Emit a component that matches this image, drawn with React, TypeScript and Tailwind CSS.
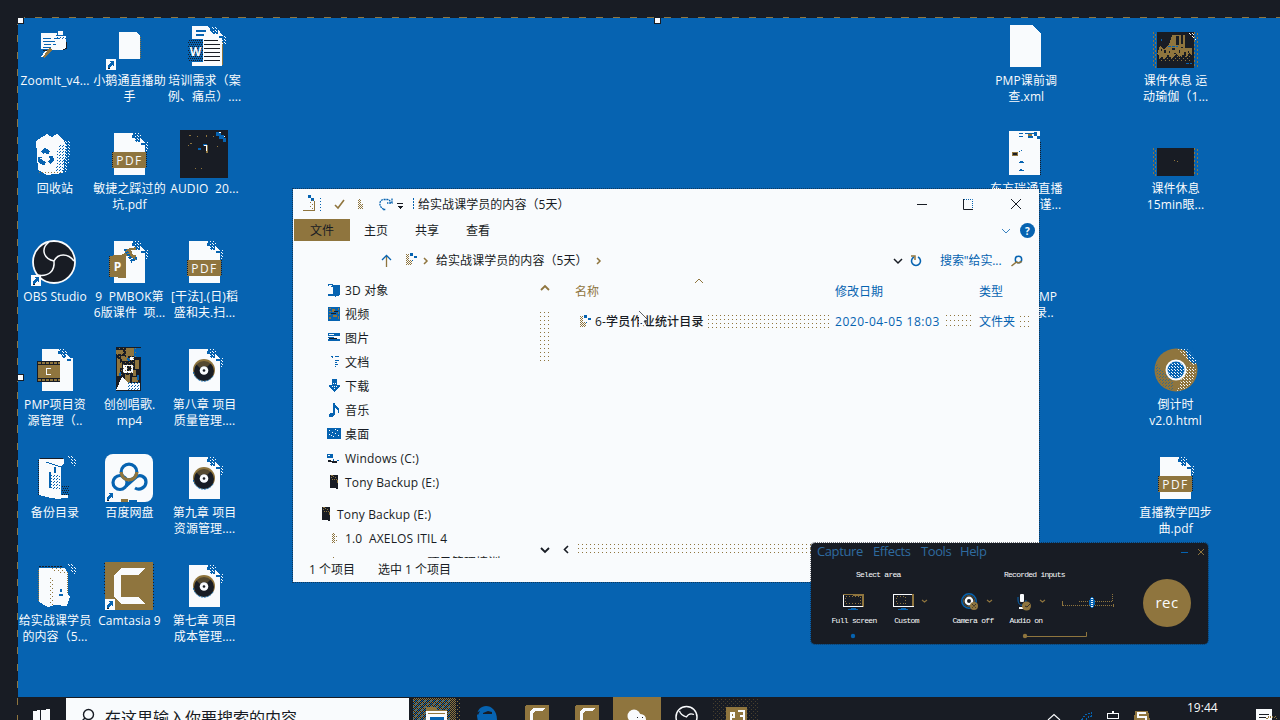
import React from 'react';

const K = '#181c24';
const B = '#0663b1';
const G = '#8f753e';
const W = '#f9fbfd';

type P = { children?: React.ReactNode };

const Patterns = () => (
  <svg className="absolute size-0" aria-hidden="true">
    <defs>
      <pattern id="dotB" width="3" height="3" patternUnits="userSpaceOnUse">
        <path fill={B} d="M0 0h1v1H0zM2 1h1v1H2z" />
      </pattern>
      <pattern id="dotG" width="4" height="4" patternUnits="userSpaceOnUse">
        <path fill={G} d="M0 0h1v1H0zM2 2h1v1H2z" />
      </pattern>
      <pattern id="dotT" width="2" height="2" patternUnits="userSpaceOnUse">
        <path fill={G} d="M0 0h1v1H0zM1 1h1v1H1z" />
      </pattern>
      <pattern id="dotW" width="3" height="3" patternUnits="userSpaceOnUse">
        <path fill={W} d="M0 0h1v1H0zM2 2h1v1H2z" />
      </pattern>
      <pattern id="dotK" width="2" height="4" patternUnits="userSpaceOnUse">
        <path fill={K} d="M0 0h1v1H0zM1 2h1v1H1z" />
      </pattern>
    </defs>
  </svg>
);

const Art = ({ children }: P) => (
  <svg viewBox="0 0 48 48" className="block size-12 overflow-visible" shapeRendering="crispEdges">
    {children}
  </svg>
);

const Fold = ({ x = 0, y = 0 }) => (
  <g>
    <path fill="url(#dotW)" d={`M${x} ${y}h8l3 9h5v9h-7l-6-8z`} />
    <path fill={B} d={`M${x} ${y + 2}h3v3h-3zM${x + 9} ${y + 9}h4v3h-4z`} />
    <path fill={W} d={`M${x + 8} ${y + 5}v5h5z`} />
  </g>
);

const Shortcut = ({ x = 0, y = 37 }) => (
  <g>
    <rect x={x} y={y} width="10" height="11" fill={W} />
    <path d={`M${x + 2} ${y + 9}v-3l3-2-1-2h4v5l-2-1-2 3z`} fill={B} />
    <path d={`M${x + 2} ${y + 9}h2v1h-2z`} fill={K} />
  </g>
);

const Page = ({ children }: P) => (
  <Art>
    <path fill={W} d="M9 3h18l4 9h9v33H9z" />
    <Fold x={27} y={3} />
    {children}
  </Art>
);

const Pdf = () => (
  <Page>
    <rect x="7" y="22" width="34" height="16" fill={G} />
    <path d="M7 22v16M41 22v16" stroke={K} strokeDasharray="1 1" />
    <text x="24.5" y="34.5" textAnchor="middle" fontSize="12" letterSpacing="1.5" fill={W} fontFamily="Open Sans, sans-serif" shapeRendering="auto">PDF</text>
  </Page>
);

const Disc = () => (
  <Page>
    <g shapeRendering="auto">
      <circle cx="24" cy="24" r="11" fill={G} />
      <circle cx="24" cy="25" r="10" fill={K} />
      <path d="M16 18a10 10 0 0 1 15-1l-4 4a5 5 0 0 0-7 1z" fill={G} opacity=".5" />
      <path d="M13.500 26a10.500 10.500 0 0 0 20 3" stroke={B} fill="none" strokeDasharray="2 1" />
      <circle cx="24" cy="24.500" r="4.300" fill={W} />
      <circle cx="24" cy="24.500" r="1.300" fill={K} />
    </g>
  </Page>
);

const Zoomit = () => (
  <Art>
    <path fill={W} d="M11 11h16v3h9v13l-4 1H19l-3-1h-5z" />
    <path stroke={B} d="M13 16.500h8m3 0h6m-17 3h12m-11 3h7m2 0h3m-13 3h8" />
    <path fill="url(#dotB)" d="M26 9h10v8H26z" />
    <path fill={W} d="M28 9h5v4h-5z" />
    <path stroke={K} strokeWidth="1" d="M36.500 20v6l-3 2m-20 0 4 1" fill="none" />
    <path stroke={G} strokeWidth="4" d="m21 27-8 8" />
    <path stroke={W} strokeWidth="1.500" d="m16 29-4 6" />
  </Art>
);

const Blank = () => (
  <Art>
    <path fill={W} d="M14 10h17l4 4v23H14z" />
    <path stroke={G} strokeDasharray="1 1" d="M35.500 15v22" />
    <Shortcut x={1} />
  </Art>
);

const Word = () => (
  <Art>
    <path fill={W} d="M12 4h16l5 8h9v32H12z" />
    <path fill={G} d="M42 20h1v23h-1z" />
    <Fold x={30} y={4} />
    <path stroke={B} strokeWidth="1.500" d="M16 9h10M16 13h8" />
    <path stroke={K} d="M24 18.500h14M24 22.500h16M24 26.500h16M24 30.500h16M24 34.500h16M24 38.500h16" />
    <path fill={B} d="M9 17h14v23H9z" />
    <path fill="url(#dotK)" d="M8 17h15v23H8z" />
    <text x="15.500" y="34" textAnchor="middle" fontSize="12" fontWeight="700" fill={W} fontFamily="Open Sans, sans-serif" shapeRendering="auto">W</text>
  </Art>
);

const Recycle = () => (
  <Art>
    <path fill={W} d="m6 11 11-7 5 3 5-3 7 6 2 6-3 27-9 1-7 1-9-5z" />
    <path fill="url(#dotB)" d="M28 14h8l-2 29h-8z" />
    <path fill="url(#dotW)" d="M35 11h5v13l-3 18h-4z" />
    <path d="m12 23 3-3 4 3m2 3 1 4-3 3m-4 1-5-3v-4" fill="none" stroke={B} strokeWidth="4" />
    <path d="M21 19v7m-11 2h4" stroke={W} />
    <path stroke={G} strokeDasharray="1 2" d="M9 42h22" />
  </Art>
);

const Audio = () => (
  <Art>
    <path fill={K} d="M0 0h48v48H0z" />
    <path fill={G} d="M9 5h2v1H9zM17 6h1v1h-1zM26 5h1v2h-1zM33 6h1v1h-1zM10 13h2v1h-2zM8 15h1v1H8zM15 38h1v1h-1zM21 38h1v1h-1zM37 16h1v1h-1zM26 15h2v8h-2z" />
    <path stroke={B} strokeWidth="2" fill="none" d="M18 19h3m2-4h4" />
    <path fill={B} d="M36 2h5v3h3v3h2v4h-3V9h-4V6h-3z" />
    <path stroke={W} fill="none" d="M24 16v-1h2v6M39 2.500h2M44 6.500h1" />
  </Art>
);

const Swirl = () => (
  <g>
    <circle cx="24" cy="24" r="21" fill={K} stroke={W} strokeWidth="1.800" />
    <g fill="none" stroke={W} strokeWidth="1.500">
      <path d="M24 23c-10-2-14-12-5-19" />
      <path d="M24 23c4-8 14-8 20 0" />
      <path d="M24 23c1 10-5 16-17 14" />
    </g>
  </g>
);

const Obs = () => (
  <Art>
    <g shapeRendering="auto"><Swirl /></g>
    <Shortcut x={1} y={37} />
  </Art>
);

const Ppt = () => (
  <Page>
    <path d="M31 9v13l-5-3-7-2 2-6z" fill={G} />
    <path d="M20 11l7 12 5-3" stroke={B} strokeWidth="3" fill="none" strokeDasharray="2 1" />
    <path d="M26 12h7v5h-5z" fill={W} />
    <path fill={G} d="m4 18 17-2v24L4 39z" />
    <path stroke={K} strokeDasharray="1 1" d="M4.500 18v21" />
    <text x="12.500" y="33" textAnchor="middle" fontSize="12" fontWeight="700" fill={W} fontFamily="Open Sans, sans-serif" shapeRendering="auto">P</text>
  </Page>
);

const CamFile = () => (
  <Art>
    <path fill={W} d="M12 3h17l4 9h10v33H12z" />
    <Fold x={28} y={3} />
    <path d="M7 15h23v21H7z" fill={K} />
    <path d="M8 19h22v13H8z" fill={G} />
    <path d="M8 17h22M8 34h22" stroke={G} strokeWidth="2" strokeDasharray="3 1" />
    <path d="M21 22.500h-4.500v6H21" fill="none" stroke={W} strokeWidth="1.300" />
  </Art>
);

const Video = () => (
  <Art>
    <path fill={K} d="M11 1h25v44H11z" />
    <path fill={G} d="M11 4h7v4h-7zM21 2h8v8h-6v5h-6v-4h4zM12 13h3v17h-3zM20 29h5v10h-5zM30 14h4v9h-4zM27 31h6v5h-6zM16 10h4v2h-4zM14 17h3v5h-3zM28 24h3v6h-3z" />
    <path fill={B} d="M29 2h7v9h-7zM22 12h3v3h-3zM14 26h2v4h-2zM32 29h2v5h-2z" />
    <path fill={W} d="m11 44 6-13 6 6h12v7zM18 19h10v8H18zM25 11h4v3h-4z" />
    <path fill={K} d="M22 20h4v5h-4zM20 15h3v3h-3z" />
    <path fill="url(#dotB)" d="M22 36h13v8H22z" />
    <path fill="url(#dotG)" d="M11 2h20v28H11z" />
  </Art>
);

const FolderBlue = () => (
  <Art>
    <path fill={W} d="M9 5h25v5l-3 2v33h-3l-7-1-12-3z" />
    <path stroke={K} d="M10 4.500h23" />
    <path stroke={K} strokeDasharray="1 1" d="M8.500 6v36" />
    <path stroke={B} d="m16 8 15 5" fill="none" />
    <path fill={B} d="M19 18h2v16h-2zM24 13h2v6h-2z" />
    <path fill="url(#dotB)" d="M21 20h9v15h-9z" />
    <path fill="url(#dotK)" d="M32 32h7v10h-7z" />
    <path fill={W} d="M29 41h9v3h-9z" />
    <path fill="url(#dotW)" d="M37 2h4l6 6v4h-4z" />
  </Art>
);

const FolderFull = () => (
  <Art>
    <path fill={W} d="M9 6h26l3 5v21l2 3-3 9-13-1-6 2-9-5z" />
    <path stroke={K} strokeDasharray="2 1" d="M9 4.500h24" />
    <path fill="url(#dotG)" d="M19 16h5v27h-5zM20 6h12l5 6h-8z" />
    <path stroke={G} strokeDasharray="1 1" d="M8.500 8v32M37.500 10v22" />
    <path fill={B} d="M30 27h2v3h-2zM29 32h4v2h-4z" />
    <path fill="url(#dotW)" d="M37 2h4l6 6v4h-4z" />
  </Art>
);

const Baidu = () => (
  <Art>
    <rect width="48" height="48" rx="8" fill={W} shapeRendering="auto" />
    <g fill="none" strokeWidth="3.200" shapeRendering="auto">
      <circle cx="24" cy="18" r="7.800" stroke={B} />
      <path d="m21 32 9-8c5-5 11-1 11 4s-6 9-11 6" stroke={B} />
      <circle cx="15" cy="28.500" r="7" stroke={B} />
      <path d="M16.200 18a7.800 7.800 0 0 0 15.600 0" stroke={G} />
    </g>
    <path fill={G} d="M16 45h7v3h-7z" />
    <path fill={B} d="M24 46h8v2h-8z" />
    <Shortcut />
  </Art>
);

const Camtasia = () => (
  <Art>
    <rect width="48" height="48" rx="1" fill={G} />
    <path stroke={K} strokeDasharray="1 2" d="M-.5 1v32M48.500 2v44" />
    <path fill={W} d="M17 6h23l-7 7H16v22h17l7 7H17l-8-7V13z" />
    <Shortcut />
  </Art>
);

const PlainPage = () => (
  <Art>
    <path fill={W} d="M9 3h22l9 9v33H9z" />
  </Art>
);

const FormPage = () => (
  <Art>
    <path fill={W} d="M8 1h31v44H8z" />
    <path fill={B} d="M18 3h4v1h-4zM24 3h10v1H24zM18 6h4v1h-4zM27 6h5v2h-5zM18 21h1v1h-1zM20 20h1v1h-1zM18 32h5v1h-5zM19 31h3v1h-3zM18 40h5v1h-5zM19 39h2v1h-2z" />
    <path fill={G} d="M11 22h6v4h-6zM27 4h4v2h-4z" />
    <path fill={K} d="M12 23h4v2h-4z" />
    <path stroke={K} strokeDasharray="1 1" d="M39.500 12v33" />
    <path fill={B} d="M33 2h3v4h-3zM36 6h3v3h-3z" />
  </Art>
);

const FilmSides = ({ y = 0, h = 36 }) => (
  <g>
    <path fill={K} d={`M6 ${y}h37v${h}H6z`} />
    <path stroke={G} strokeDasharray="2 2" d={`M2.500 ${y}v${h}M4.500 ${y + 2}v${h - 2}M43.500 ${y}v${h}M46.500 ${y + 1}v${h - 1}`} />
  </g>
);

const Yoga = () => (
  <Art>
    <FilmSides y={10} h={36} />
    <path fill={G} d="m18 23 3-10h13v10h3l4 4v6l-3-2-2 4-4-2-4 2-3-3-4 4-4-3-3 4-3-2-3 2v-4l-2-1 3-8 4 3z" />
    <path fill={K} d="M25 14h3v9h-3zM30 13h2v9h-2zM13 28h2v3h-2zM21 26h3v2h-3zM34 19h7v7h-7zM33 30h2v4h-2z" />
    <path fill={K} d="M18 29h1v2h-1zM16 33h1v2h-1zM23 31h2v1h-2zM28 28h1v3h-1zM37 29h1v2h-1zM30 25h2v1h-2zM10 27h1v2h-1z" />
    <path stroke={B} d="M17 24.500h10M35 41h6M10 17v2" strokeDasharray="3 1" />
    <path fill="url(#dotW)" d="M37 11h6l3 7h-4z" />
    <path fill="url(#dotG)" d="M8 32h32v8H8z" />
  </Art>
);

const Black = () => (
  <Art>
    <FilmSides y={18} h={28} />
    <path fill={G} d="M23 30h1v1h-1zM26 31h1v1h-1z" />
  </Art>
);

const Chrome = () => (
  <Art>
    <g shapeRendering="auto">
      <circle cx="25" cy="24" r="21.500" fill={G} />
      <path fill={B} d="M33 0h8l6 13-3 5-6-3z" />
      <path fill="url(#dotW)" d="M27 3h9l9 10v6h-5l-4-6z" />
      <path fill="url(#dotW)" d="M35 21h10c0 14-8 23-19 24z" />
      <path fill="url(#dotB)" d="M5 17l17 19 1 8C10 43 4 31 5 17z" opacity=".6" />
      <circle cx="25" cy="24" r="9.500" fill={B} stroke={W} strokeWidth="2" />
      <circle cx="25" cy="24" r="8" fill="url(#dotW)" />
    </g>
  </Art>
);

type Item = { c: string; a?: React.ReactNode; t: string[] };
const items: Item[] = [
  { c: 'col-start-1 row-start-1', a: <Zoomit />, t: ['ZoomIt_v4...'] },
  { c: 'col-start-2 row-start-1', a: <Blank />, t: ['小鹅通直播助', '手'] },
  { c: 'col-start-3 row-start-1', a: <Word />, t: ['培训需求（案', '例、痛点）....'] },
  { c: 'col-start-1 row-start-2', a: <Recycle />, t: ['回收站'] },
  { c: 'col-start-2 row-start-2', a: <Pdf />, t: ['敏捷之踩过的', '坑.pdf'] },
  { c: 'col-start-3 row-start-2', a: <Audio />, t: ['AUDIO  20...'] },
  { c: 'col-start-1 row-start-3', a: <Obs />, t: ['OBS Studio'] },
  { c: 'col-start-2 row-start-3', a: <Ppt />, t: ['9  PMBOK第', '6版课件  项...'] },
  { c: 'col-start-3 row-start-3', a: <Pdf />, t: ['[干法].(日)稻', '盛和夫.扫...'] },
  { c: 'col-start-1 row-start-4', a: <CamFile />, t: ['PMP项目资', '源管理（..'] },
  { c: 'col-start-2 row-start-4', a: <Video />, t: ['创创唱歌.', 'mp4'] },
  { c: 'col-start-3 row-start-4', a: <Disc />, t: ['第八章 项目', '质量管理....'] },
  { c: 'col-start-1 row-start-5', a: <FolderBlue />, t: ['备份目录'] },
  { c: 'col-start-2 row-start-5', a: <Baidu />, t: ['百度网盘'] },
  { c: 'col-start-3 row-start-5', a: <Disc />, t: ['第九章 项目', '资源管理....'] },
  { c: 'col-start-1 row-start-6', a: <FolderFull />, t: ['给实战课学员', '的内容（5...'] },
  { c: 'col-start-2 row-start-6', a: <Camtasia />, t: ['Camtasia 9'] },
  { c: 'col-start-3 row-start-6', a: <Disc />, t: ['第七章 项目', '成本管理....'] },
  { c: 'col-start-14 row-start-1', a: <PlainPage />, t: ['PMP课前调', '查.xml'] },
  { c: 'col-start-16 row-start-1', a: <Yoga />, t: ['课件休息 运', '动瑜伽（1...'] },
  { c: 'col-start-14 row-start-2', a: <FormPage />, t: ['东方瑞通直播', '课前调查谨...'] },
  { c: 'col-start-16 row-start-2', a: <Black />, t: ['课件休息', '15min眼...'] },
  { c: 'col-start-14 row-start-3', t: ['直播间PMP', '资料目录..'] },
  { c: 'col-start-16 row-start-4', a: <Chrome />, t: ['倒计时', 'v2.0.html'] },
  { c: 'col-start-16 row-start-5', a: <Pdf />, t: ['直播教学四步', '曲.pdf'] },
];

const Desktop = () => (
  <div className="grid grid-cols-[74px_75px_75px_repeat(14,74.7px)] grid-rows-[repeat(6,108px)] pt-[4px]">
    {items.map((it) => (
      <div key={it.c} className={`${it.c} flex flex-col items-center text-[#f9fbfd]`}>
        <div className="size-12 -translate-x-px">{it.a}</div>
        <div className="mt-[3px] text-center text-[12px] leading-4 tracking-[0.1px] whitespace-pre">
          {it.t.map((l) => <div key={l}>{l}</div>)}
        </div>
      </div>
    ))}
  </div>
);

const Chev = ({ d, c = K, w = 1.8 }: { d: string; c?: string; w?: number }) => (
  <svg viewBox="0 0 10 10" className="size-[10px] shrink-0"><path d={d} fill="none" stroke={c} strokeWidth={w} /></svg>
);

const MiniFolder = () => (
  <svg viewBox="0 0 14 16" className="h-4 w-[14px] shrink-0" shapeRendering="crispEdges">
    <path fill="url(#dotT)" d="M2 2h3v11H2zM5 8h3v5H5z" />
    <path fill={B} d="M6 1h3v3H6zM10 4h3v2h-3zM8 8h1v1H8z" />
  </svg>
);

const Sm = ({ children }: P) => (
  <svg viewBox="0 0 16 16" className="size-4 shrink-0" shapeRendering="crispEdges">{children}</svg>
);

const Drive = () => (
  <Sm>
    <path fill={K} d="M4 1h8v14h-2l-1-1H4z" />
    <path fill={G} d="M5 3h1v1H5zM7 2h1v1H7zM9 3h1v1H9zM6 5h1v1H6zM8 5h1v1H8zM10 5h1v1h-1zM5 1h2v1H5zM11 6h1v3h-1z" />
  </Sm>
);

const tree: [React.ReactNode, string][] = [
  [<Sm><path fill={B} d="M2 2h5v1h7v10l-5 2v-1H2v-2h5V5L2 4z" /><path fill={W} d="M3 3h3v1H3z" /></Sm>, '3D 对象'],
  [<Sm><path fill={B} d="M2 1h12v14H2z" /><path fill={G} d="M3 2h2v1H3zM3 5h2v1H3zM3 8h2v1H3zM3 11h2v2H3zM6 3h3v3H6zM7 9h4v2H7zM12 2h1v2h-1zM12 6h1v2h-1zM12 10h1v3h-1z" /><path fill={K} d="M5 7h5v1H5zM8 5h4v1H8z" /></Sm>, '视频'],
  [<Sm><path fill={B} d="M2 3h12v3H2zM2 7h6v1H2zM2 9h12v2H2z" /><path fill={K} d="M3 8h8v1H3z" /><path fill={W} d="M3 4h5v1H3z" /></Sm>, '图片'],
  [<Sm><path fill={B} d="M6 3h1v1H6zM9 2h4v1H9zM9 6h4v1H9zM9 8h2v1H9zM9 10h3v1H9zM9 12h1v1H9zM5 2h2v1H5z" /></Sm>, '文档'],
  [<Sm><path fill={B} d="M6 1h5v6h3v2l-5.500 5L3 9V7h3z" /><path fill={W} d="M7 5h1v1H7zM9 5h1v1H9zM6 8h1v1H6zM8 8h1v1H8zM10 8h1v1h-1zM8 10h1v1H8z" /></Sm>, '下载'],
  [<Sm><path fill={B} d="M7 1h2l1 3 3 3v4h-1V8L9 6v6l-2 3H3v-3l2-1h2z" /></Sm>, '音乐'],
  [<Sm><path fill={B} d="M1 2h14v11H1z" /><path fill={W} d="M3 4h1v1H3zM9 3h1v1H9zM11 4h1v1h-1zM6 6h1v1H6zM3 8h1v1H3zM5 9h1v1H5zM9 7h1v1H9zM12 9h1v1h-1zM7 10h1v1H7z" /></Sm>, '桌面'],
  [<Sm><path fill={B} d="M1 4h6v4H1zM7 9h1v2H7zM11 10h2v1h-2z" /><path fill={W} d="M2 5h2v1H2z" /><path fill={K} d="M2 10h3v1h6v2H6v-1H2z" /></Sm>, 'Windows (C:)'],
  [<Drive />, 'Tony Backup (E:)'],
];

const TreeRow = ({ icon, label, pad }: { icon: React.ReactNode; label: string; pad: string }) => (
  <div className={`flex h-6 shrink-0 items-center gap-[3px] tracking-[0.17px] whitespace-pre ${pad}`}>
    {icon}
    <span className="pt-px">{label}</span>
  </div>
);

const TinyFolder = () => (
  <Sm><path fill="url(#dotT)" d="M6 3h3v10H6z" /><path fill="url(#dotG)" d="M9 3h2v10H9z" /></Sm>
);

const Explorer = () => (
  <section className="absolute top-[189px] left-[293px] flex h-[393px] w-[746px] flex-col bg-[#f9fbfd] text-[12px] leading-4 text-[#181c24] outline-1 outline-dotted outline-[#181c24]/60">
    <header className="flex h-[30px] items-center pl-[9px]">
      <svg viewBox="0 0 112 20" className="h-5 w-[112px]" shapeRendering="crispEdges">
        <path fill={B} d="M6 1h3v3H6zM9 4h3v3H9z" />
        <path fill="url(#dotG)" d="M8 5h4v11H8z" />
        <path stroke={G} fill="none" d="M1 16.500h11.500V7" />
        <path stroke={B} strokeDasharray="1 2" d="M18.500 4v13" />
        <path stroke={G} strokeWidth="1.600" fill="none" shapeRendering="auto" d="m33 11 3 3 6-8" />
        <path fill="url(#dotT)" d="M56 5h3v10h-3zM59 10h2v5h-2z" />
        <path stroke={B} strokeWidth="1.300" strokeDasharray="2 .7" fill="none" shapeRendering="auto" d="M82 15.500c-6-3-5-10 0-10h3c2 0 3 1 4 3m1-4v4.500h-5M81 15.500h3" />
        <path stroke={K} strokeWidth="1" d="M95 9.500h6" />
        <path fill={K} d="M95 12h6l-3 3z" />
        <path stroke={B} strokeDasharray="2 1" d="M111.500 4v12" />
      </svg>
      <h1 className="ml-[4px] pt-px tracking-[0.05px]">给实战课学员的内容（5天）</h1>
      <div className="ml-auto flex items-center gap-[35px] pr-[17px]">
        <svg viewBox="0 0 12 12" className="size-3"><path d="M1 6.500h10" stroke={K} /></svg>
        <svg viewBox="0 0 12 12" className="size-3"><path d="M.5 1v10.500H10" fill="none" stroke={K} /><path d="M1 1.500h8.500V11" fill="none" stroke={B} strokeDasharray="1 1" /></svg>
        <svg viewBox="0 0 12 12" className="size-3"><path d="m1 1 10 10M11 1 1 11" stroke={K} /></svg>
      </div>
    </header>
    <nav className="flex h-[23px] items-center">
      <span className="ml-px flex h-[22px] w-14 items-center justify-center self-start bg-[#8f753e] pt-px">文件</span>
      <span className="ml-[14px] pt-px">主页</span>
      <span className="ml-[27px] pt-px">共享</span>
      <span className="ml-[27px] pt-px">查看</span>
      <span className="ml-auto flex items-center gap-[9px] pr-[4px]">
        <Chev d="m1 3 4 4 4-4" c={B} w={0.8} />
        <span className="flex size-[15px] items-center justify-center rounded-full bg-[#0663b1] text-[10px] font-bold text-[#f9fbfd]">?</span>
      </span>
    </nav>
    <div className="flex h-9 items-center pl-[87px]">
      <svg viewBox="0 0 14 14" className="mt-[2px] size-[14px]"><path d="M6.500 13V2" stroke={G} strokeWidth="1.300" /><path d="m2 6 4.500-4.500L11 6" fill="none" stroke={B} strokeWidth="1.300" /></svg>
      <span className="ml-[10px] flex"><MiniFolder /></span>
      <span className="mt-[2px] ml-[3px]"><Chev d="m3 2 3 3-3 3" c={G} w={1.5} /></span>
      <span className="mt-[2px] ml-[5px] tracking-[0.05px]">给实战课学员的内容（5天）</span>
      <span className="mt-[2px] ml-[6px]"><Chev d="m3 2 3 3-3 3" c={G} w={1.5} /></span>
      <span className="mt-[2px] ml-auto"><Chev d="m1 3 4 4 4-4" c={K} w={1.500} /></span>
      <svg viewBox="0 0 12 12" className="mt-[2px] ml-[7px] size-3"><path d="M8 2a4.500 4.500 0 1 1-4 0" fill="none" stroke={B} strokeWidth="1.600" /><path d="M1 1h4v4" fill="none" stroke={G} strokeWidth="1.500" /></svg>
      <span className="mt-[2px] ml-[18px] w-[62px] tracking-[-0.1px] whitespace-nowrap text-[#0663b1]">搜索"给实...</span>
      <svg viewBox="0 0 12 12" className="mt-[2px] mr-[16px] ml-[9px] size-3"><circle cx="7.500" cy="4.500" r="3.200" fill="none" stroke={B} strokeWidth="1.500" /><path d="M10.500 6a3.200 3.200 0 0 1-5 1l-5 4" fill="none" stroke={G} strokeWidth="1.600" /></svg>
    </div>
    <div className="flex h-[280px] shrink-0">
      <aside className="flex w-[247px] flex-col overflow-hidden">
        {tree.map(([i, l]) => <TreeRow key={l} icon={i} label={l} pad="pl-[33px]" />)}
        <div className="h-2 shrink-0" />
        <TreeRow icon={<Drive />} label="Tony Backup (E:)" pad="pl-[25px]" />
        <TreeRow icon={<TinyFolder />} label="1.0  AXELOS ITIL 4" pad="pl-[33px]" />
        <TreeRow icon={<TinyFolder />} label="1.0 Tony Ma – 项目管理培训" pad="pl-[33px]" />
      </aside>
      <div className="flex w-[22px] flex-col items-start pt-[5px] pb-[3px]">
        <Chev d="m1 7 4-4 4 4" c={G} w={1.8} />
        <div className="mt-[19px] h-[50px] w-[10px] bg-[radial-gradient(circle_at_0.5px_0.5px,#8f753e_0.7px,transparent_0.8px)] bg-[size:4px_4px]" />
        <span className="mt-auto"><Chev d="m1 3 4 4 4-4" c={K} w={1.8} /></span>
      </div>
      <main className="flex flex-1 flex-col">
        <div className="flex h-7 items-center pl-[13px] text-[#0663b1]">
          <span className="w-[119px] text-[#8f753e]">名称</span>
          <span className="-mt-px w-[141px] self-start"><Chev d="m1 6 4-4 4 4" c={G} w={1} /></span>
          <span className="w-36">修改日期</span>
          <span>类型</span>
        </div>
        <div className="mt-[4px] flex h-6 items-center pl-[16px]">
          <MiniFolder />
          <span className="ml-[3px] w-[111px] font-medium tracking-[0.2px] whitespace-nowrap">6-学员作业统计目录</span>
          <span className="ml-[2px] h-[15px] w-[122px] bg-[radial-gradient(circle_at_0.5px_0.5px,#8f753e_0.7px,transparent_0.8px)] bg-[size:4px_4px]" />
          <span className="ml-[5px] w-[109px] tracking-[0.53px] whitespace-nowrap text-[#0663b1]">2020-04-05 18:03</span>
          <span className="ml-[2px] h-[15px] w-[28px] bg-[radial-gradient(circle_at_0.5px_0.5px,#8f753e_0.7px,transparent_0.8px)] bg-[size:4px_5px]" />
          <span className="ml-[5px] text-[#0663b1]">文件夹</span>
          <span className="ml-[5px] h-[12px] w-[9px] bg-[radial-gradient(circle_at_0.5px_0.5px,#8f753e_0.7px,transparent_0.8px)] bg-[size:4px_5px]" />
        </div>
        <div className="mt-auto flex h-[18px] items-center">
          <Chev d="m6 2-3.500 3.500L6 9" c={K} w={1.6} />
          <span className="ml-[6px] h-[10px] flex-1 bg-[radial-gradient(circle_at_0.5px_0.5px,#8f753e_0.7px,transparent_0.8px)] bg-[size:4px_4px]" />
        </div>
      </main>
    </div>
    <footer className="flex h-6 items-center gap-[23px] pl-[16px]">
      <span>1 个项目</span>
      <span>选中 1 个项目</span>
    </footer>
  </section>
);

const Monitor = ({ custom = false }: { custom?: boolean }) => (
  <svg viewBox="0 0 22 18" className="h-[18px] w-[22px]" shapeRendering="crispEdges">
    <path d="M.5 1.500v12h20" fill="none" stroke={W} />
    <path d="M0 1.500h20.500v12" stroke={custom ? W : G} fill="none" />
    {custom ? <path d="M20 1v12" stroke={G} strokeWidth="2" /> : <path d="M20 1v12M10 2h11" stroke={G} strokeWidth="2" />}
    <rect x={custom ? 3.5 : 2.5} y="3.500" width={custom ? 9 : 15} height="7" fill="none" stroke={G} strokeDasharray="1 2" />
    <path d="M5 16.500h10M8 15.500h5" stroke={B} />
  </svg>
);

const Tool = ({ icon, label, w, arrow }: { icon: React.ReactNode; label: string; w: string; arrow?: string }) => (
  <div className={`flex flex-col items-center ${w}`}>
    <div className="flex h-[21px] items-center justify-center pt-[2px]">
      <span className="relative flex">
        {icon}
        {arrow && <span className={`absolute top-1 ${arrow}`}><Chev d="m3 3 2.500 2L8 3" c={G} w={1.200} /></span>}
      </span>
    </div>
    <div className="mt-[5px] font-['Liberation_Mono',monospace] text-[8px] leading-[9px] tracking-[-0.7px] whitespace-nowrap">{label}</div>
  </div>
);

const Recorder = () => (
  <section className="absolute top-[543px] left-[811px] flex h-[101px] w-[397px] flex-col rounded-[4px] bg-[#181c24] text-[#f9fbfd] outline-1 outline-dotted outline-[#181c24]/60">
    <header className="flex h-[18px] items-center pl-[6px] text-[13px] tracking-[-0.4px] text-[#2f6ba0]">
      <span className="w-[56px]">Capture</span><span className="w-[48px]">Effects</span><span className="w-[39px]">Tools</span><span>Help</span>
      <span className="ml-auto flex gap-[6px] pr-[2px]">
        <Chev d="M1 5.500h7" c={B} w={1} />
        <Chev d="m2 2 6 6M8 2 2 8" c={G} w={1} />
      </span>
    </header>
    <div className="flex flex-1 pt-[2px]">
      <div className="flex w-[332px] flex-col">
        <div className="flex pt-[7px] font-['Liberation_Mono',monospace] text-[8px] leading-[10px] tracking-[-0.75px]">
          <span className="ml-[45px] w-[148px]">Select area</span>
          <span>Recorded inputs</span>
        </div>
        <div className="mt-[10px] flex">
          <Tool w="ml-[12px] w-[62px]" label="Full screen" icon={<Monitor />} />
          <Tool w="w-[43px]" arrow="left-[20px]" label="Custom" icon={<span className="-ml-[6px] flex"><Monitor custom /></span>} />
          <Tool w="ml-[18px] w-[54px]" arrow="left-[19px]" label="Camera off" icon={
            <svg viewBox="0 0 22 18" className="-ml-[6px] h-[18px] w-[22px]"><circle cx="10" cy="8" r="7.200" fill="none" stroke={B} strokeWidth="1.500" /><circle cx="10" cy="8" r="5.600" fill={K} stroke={G} strokeWidth=".6" /><circle cx="10" cy="8" r="3.200" fill="none" stroke={W} strokeWidth="2.400" /><circle cx="15" cy="13" r="4" fill={G} /><path d="m13 11 4 4M17 11l-4 4" stroke={K} strokeDasharray="1 1" /></svg>
          } />
          <Tool w="w-[52px]" arrow="left-[19px]" label="Audio on" icon={
            <svg viewBox="0 0 22 18" className="-ml-[6px] h-[18px] w-[22px]"><path d="M6 4v3c0 7 8 7 8 0" fill="none" stroke={B} /><rect x="8" y="1" width="4" height="8" rx="1" fill={W} /><path d="M7 14h5v2H7z" fill={W} /><circle cx="14.500" cy="13" r="4.500" fill={G} /><path d="m13 13 2 1 3-3" fill="none" stroke={K} strokeWidth=".8" /></svg>
          } />
          <svg viewBox="0 0 54 20" className="mt-[3px] ml-[9px] h-5 w-[54px]" shapeRendering="crispEdges">
            <path d="M2 12.500h50" stroke={G} strokeDasharray="1 1" fill="none" />
            <path d="M18 8.500h33.500V1" stroke={G} strokeDasharray="1 1" fill="none" />
            <path d="M1.500 8v5M52.500 11v3" stroke={G} />
            <ellipse cx="31" cy="9.500" rx="3" ry="5.500" fill={B} />
            <path stroke={W} strokeDasharray="1 1" d="M31 5v10" strokeWidth="2" />
          </svg>
        </div>
        <svg viewBox="0 0 332 14" className="mt-[3px] h-[14px] w-[332px]">
          <circle cx="42" cy="8" r="2.200" fill={B} />
          <circle cx="214" cy="8" r="2.200" fill={G} />
          <path d="M215 8.500h60.500V4" fill="none" stroke={G} />
        </svg>
      </div>
      <div className="mt-[16px] flex size-12 items-center justify-center rounded-full bg-[#8f753e] pb-[2px] text-[15px] tracking-[0.5px]">rec</div>
    </div>
  </section>
);

const CBar = () => (
  <svg viewBox="0 0 50 24" className="h-6 w-[50px] shrink-0" shapeRendering="crispEdges">
    <rect x="12" y="8" width="24" height="18" rx="2" fill={G} />
    <path d="M32 11H20l-3 4v9h3v-8l2-2h7z" fill={W} />
  </svg>
);

const Taskbar = () => (
  <div className="flex h-[23px] shrink-0 items-start overflow-hidden bg-[#181c24] text-[#f9fbfd]">
    <svg viewBox="0 0 48 23" className="h-[23px] w-12" shapeRendering="crispEdges"><path fill={W} d="M15 14l7-1v10h-7zM23 13l9-1v11h-9z" /></svg>
    <div className="mt-px flex h-[46px] w-[343px] items-start gap-[9px] bg-[#f9fbfd] pt-[8px] pl-[14px] text-[#181c24]">
      <svg viewBox="0 0 16 16" className="mt-px size-4"><circle cx="8.500" cy="7.500" r="5" fill="none" stroke={K} strokeWidth="1.400" /><path d="m5 11-4 4" stroke={K} strokeWidth="1.400" /></svg>
      <span className="text-[16px] leading-[24px] whitespace-nowrap">在这里输入你要搜索的内容</span>
    </div>
    <svg viewBox="0 0 50 24" className="ml-[4px] h-6 w-[50px]" shapeRendering="crispEdges">
      <path fill="url(#dotT)" d="M0 1h43v23H0z" /><path fill="url(#dotG)" d="M43 1h5v23h-5z" /><path fill="url(#dotB)" d="M0 2h38v22H0z" />
      <path fill={G} d="M13 10h9l2 3h10v11H13z" /><path fill={W} d="M13 14h21v10H13z" /><path fill={G} d="M15 16h17v1H15z" /><path fill={B} d="M17 20h14v4H17z" />
    </svg>
    <svg viewBox="0 0 50 24" className="h-6 w-[50px]"><path fill={B} d="M14 19c0-14 20-14 20 4v2H15z" /><path fill={K} d="M20 17h9v-2l-4-1-5 2zM13 16l4-2-2 4z" /></svg>
    <CBar />
    <CBar />
    <svg viewBox="0 0 48 24" className="h-6 w-12 shrink-0"><path fill={G} d="M0 0h48v24H0z" /><circle cx="21" cy="19" r="6.500" fill={W} /><circle cx="27.500" cy="22.500" r="5.500" fill={W} /><path fill={K} d="M24 20h1v1h-1zM29 20h1v1h-1z" /></svg>
    <svg viewBox="0 0 50 24" className="h-6 w-[50px]"><g transform="translate(13.500 8) scale(.5)"><circle cx="24" cy="24" r="21" fill="none" stroke={W} strokeWidth="3" /><path d="M10 12c2 8 8 10 14 12 3-6 8-8 15-5" stroke={W} strokeWidth="2.500" fill="none" /></g></svg>
    <svg viewBox="0 0 50 24" className="h-6 w-[50px]" shapeRendering="crispEdges"><path fill="url(#dotG)" opacity=".4" d="M2 1h45v23H2z" /><path fill={G} d="M15 10h21v14H15z" /><path fill="none" stroke={W} strokeWidth="2" d="M20 24v-8h3v4h-3M27 14h6v5h-4m4 0v5h-6" /></svg>
    <div className="ml-auto flex items-start">
      <svg viewBox="0 0 130 23" className="h-[23px] w-[130px]" shapeRendering="crispEdges">
        <path d="m10 23 6-5.500 6 5.500" fill="none" stroke={W} strokeWidth="1.200" shapeRendering="auto" />
        <path d="M44 23c1-4 5-7 10-7m-6 7c1-2 3-4 6-4" fill="none" stroke={B} strokeWidth="1.300" strokeDasharray="2 1" />
        <path d="M69.500 16.500h11v5h-11zM75 14v2" fill="none" stroke={W} strokeWidth="1.500" />
        <path fill={G} d="M97 14h13l2 9H96z" /><path d="M108 16h-8v4h8v4" fill="none" stroke={W} strokeWidth="2.500" />
      </svg>
      <span className="ml-[19px] w-[34px] pt-[3px] text-[12px] leading-4">19:44</span>
      <svg viewBox="0 0 59 23" className="h-[23px] w-[59px]" shapeRendering="crispEdges"><path fill={W} d="M35 12h16v11H35z" /><path stroke={K} d="M38 17.500h10M38 20.500h7" /><path stroke={G} strokeWidth="2" fill="none" strokeDasharray="1 1" d="M46 22c2-3 8-3 10 0" /></svg>
    </div>
  </div>
);

export default function App() {
  return (
    <div className="relative flex h-[720px] w-[1280px] flex-col overflow-hidden bg-[#181c24] pt-[18px] pl-[18px] font-['Open_Sans','Noto_Sans_CJK_SC',sans-serif]">
      <Patterns />
      <div className="h-[679px] w-[1262px] shrink-0 overflow-hidden bg-[#0663b1]">
        <Desktop />
      </div>
      <Taskbar />
      <Explorer />
      <Recorder />
      <svg viewBox="0 0 12 20" className="absolute top-[310px] left-[637px] h-5 w-3"><path d="m2 1 9 9-4 1 3 6-2 1-3-6-3 3z" fill={W} /><path d="m2 1 9 9-4 1 3 5" fill="none" stroke={K} strokeWidth=".7" /></svg>
      <svg viewBox="0 0 1280 720" className="pointer-events-none absolute inset-0" shapeRendering="crispEdges">
        <path d="M17.500 17.500H1280M17.500 17.500V720" fill="none" stroke={G} strokeDasharray="7 10" />
        <path d="M17.500 17.500h6v6h-6zM654.500 17.500h6v6h-6zM17.500 374.500h6v6h-6z" fill={W} stroke={K} />
      </svg>
    </div>
  );
}
